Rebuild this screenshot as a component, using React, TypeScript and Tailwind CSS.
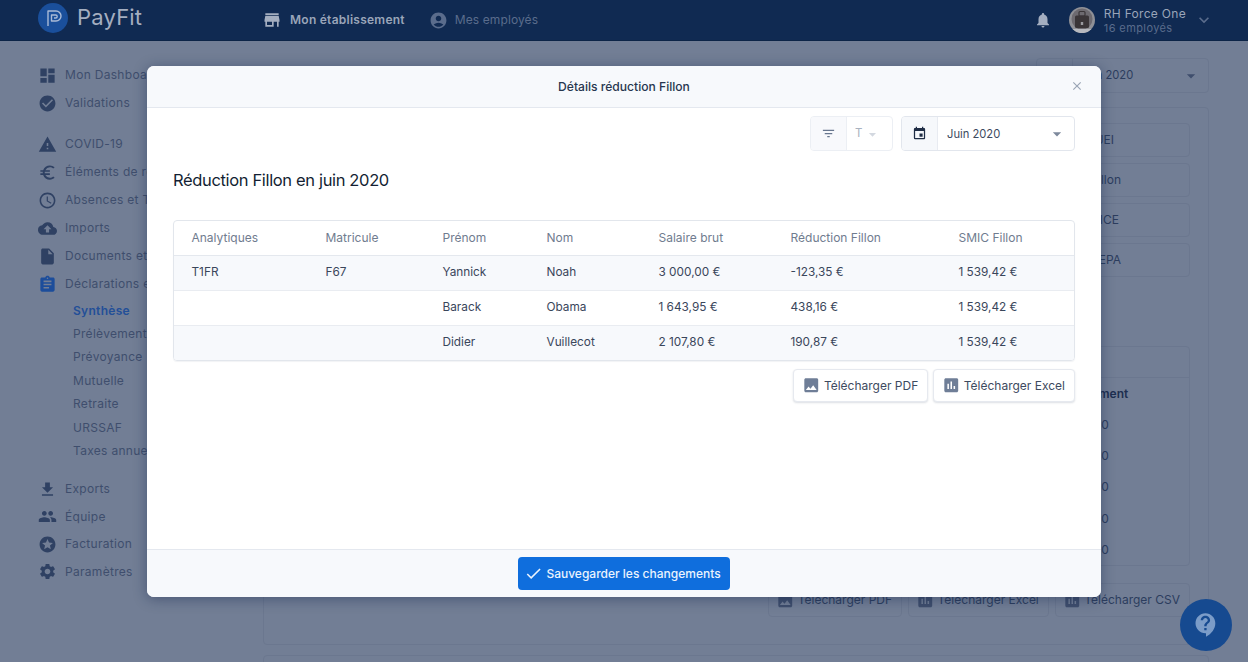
import {
  MdAccessTime,
  MdAccountCircle,
  MdArrowDropDown,
  MdAssignment,
  MdCheck,
  MdCheckCircle,
  MdClose,
  MdCloudUpload,
  MdContactSupport,
  MdDashboard,
  MdEuroSymbol,
  MdEvent,
  MdFileDownload,
  MdFilterList,
  MdImage,
  MdInsertChart,
  MdInsertDriveFile,
  MdKeyboardArrowDown,
  MdNotifications,
  MdPeople,
  MdSettings,
  MdStars,
  MdStore,
  MdWarning,
} from "react-icons/md";

type IconType = React.ComponentType<{ className?: string }>;

const topItems = [
  { label: "Mon Dashboard", Icon: MdDashboard },
  { label: "Validations", Icon: MdCheckCircle },
];

const midItems = [
  { label: "COVID-19", Icon: MdWarning },
  { label: "Éléments de rémunération", Icon: MdEuroSymbol },
  { label: "Absences et Temps", Icon: MdAccessTime },
  { label: "Imports", Icon: MdCloudUpload },
  { label: "Documents et contrats", Icon: MdInsertDriveFile },
];

const subItems = ["Prélèvement", "Prévoyance", "Mutuelle", "Retraite", "URSSAF", "Taxes annuelles"];

const bottomItems = [
  { label: "Exports", Icon: MdFileDownload },
  { label: "Équipe", Icon: MdPeople },
  { label: "Facturation", Icon: MdStars },
  { label: "Paramètres", Icon: MdSettings },
];

const reportButtons = [
  { label: "Détails JEI", className: "pr-[75px]" },
  { label: "Réduction Fillon", className: "pr-[68px]" },
  { label: "Détails CICE", className: "pr-[70px]" },
  { label: "Détails TEPA", className: "pr-[68px]" },
];

const rows = [
  ["T1FR", "F67", "Yannick", "Noah", "3 000,00 €", "-123,35 €", "1 539,42 €"],
  ["", "", "Barack", "Obama", "1 643,95 €", "438,16 €", "1 539,42 €"],
  ["", "", "Didier", "Vuillecot", "2 107,80 €", "190,87 €", "1 539,42 €"],
];

function NavRow({ label, Icon, active = false, compact = false }: { label: string; Icon: IconType; active?: boolean; compact?: boolean }) {
  return (
    <div className={`flex items-center gap-[8px] pl-[38px] whitespace-nowrap ${compact ? "h-[27.5px]" : "h-[28px]"}`}>
      <Icon className={`h-[19px] w-[19px] shrink-0 ${active ? "text-[#1c4d9b]" : "text-[#2f4163]"}`} />
      <span className="text-[12px] tracking-[0.3px] text-[#3f4e6d]">{label}</span>
    </div>
  );
}

function Sidebar() {
  return (
    <aside className="w-[147px] shrink-0 overflow-hidden pt-[20px]">
      {topItems.map((item) => (
        <NavRow key={item.label} {...item} />
      ))}
      <div className="h-[13px]" />
      {midItems.map((item) => (
        <NavRow key={item.label} {...item} />
      ))}
      <NavRow label="Déclarations et taxes" Icon={MdAssignment} active />
      <div className="pl-[73px] pt-[1px] text-[12px] tracking-[0.3px] text-[#3f4e6d]">
        <div className="flex h-[23.4px] items-center font-semibold text-[#234f98]">Synthèse</div>
        {subItems.map((label) => (
          <div key={label} className="flex h-[23.4px] items-center whitespace-nowrap">
            {label}
          </div>
        ))}
      </div>
      <div className="h-[13px]" />
      {bottomItems.map((item) => (
        <NavRow key={item.label} {...item} compact />
      ))}
    </aside>
  );
}

function Avatar() {
  return (
    <svg viewBox="0 0 26 26" className="h-[26px] w-[26px] shrink-0">
      <circle cx="13" cy="13" r="13" fill="#8f9096" />
      <circle cx="13" cy="12" r="10.5" fill="#6d6a70" />
      <rect x="6" y="8.5" width="14" height="12.5" rx="1.5" fill="#3a3538" />
      <rect x="10" y="4.5" width="6" height="4.5" rx="1" fill="none" stroke="#3a3538" strokeWidth="1.2" />
      <rect x="11.8" y="15" width="2.4" height="3" fill="#9a9aa0" />
      <path d="M3.5 22h19a13 13 0 0 1-19 0z" fill="#b7b9bf" />
    </svg>
  );
}

function Header() {
  return (
    <header className="flex h-[41px] shrink-0 items-center border-b border-[#0c2447] bg-[#102a52] pl-[38px] pr-[34px]">
      <div className="flex w-[224px] items-center gap-[9px]">
        <svg viewBox="0 0 30 30" className="-mt-[4px] h-[30px] w-[30px] shrink-0">
          <circle cx="15" cy="15" r="15" fill="#1a4f9b" />
          <path
            d="M10 23V8h8a5 5 0 0 1 0 10h-4.5v-6h4.2a1.5 1.5 0 0 1 0 3H16"
            fill="none"
            stroke="#a9bad6"
            strokeWidth="1.4"
            strokeLinejoin="round"
          />
        </svg>
        <span className="-mt-[7px] text-[22px] leading-none tracking-[0.2px] text-[#a4aec0]">PayFit</span>
      </div>
      <nav className="flex items-center gap-[24px] text-[12px]">
        <div className="flex items-center gap-[8px] font-semibold tracking-[0.25px] text-[#9aa5b9]">
          <MdStore className="h-[20px] w-[20px] text-[#a4aec0]" />
          Mon établissement
        </div>
        <div className="flex items-center gap-[7px] tracking-[0.1px] text-[#5a6c8c]">
          <MdAccountCircle className="h-[19px] w-[19px]" />
          Mes employés
        </div>
      </nav>
      <div className="ml-auto flex items-center">
        <MdNotifications className="mr-[17px] h-[18px] w-[18px] text-[#a4aec0]" />
        <Avatar />
        <div className="ml-[9px] tracking-[0.3px]">
          <div className="text-[12px] leading-[15px] text-[#9aa5b9]">RH Force One</div>
          <div className="text-[11px] leading-[14px] tracking-[0.4px] text-[#5a6c8c]">16 employés</div>
        </div>
        <MdKeyboardArrowDown className="ml-[8px] h-[20px] w-[20px] text-[#5a6c8c]" />
      </div>
    </header>
  );
}

function GhostButton({ label, Icon }: { label: string; Icon: IconType }) {
  return (
    <div className="flex h-[34px] items-center gap-[3px] whitespace-nowrap rounded-[4px] border border-[#6b778f] pl-[7px] pr-[9px] text-[12px] text-[#2c3d5e]">
      <Icon className="h-[18.5px] w-[18.5px] text-[#3f4e6d]" />
      {label}
    </div>
  );
}

function Background() {
  return (
    <div className="flex h-[662px] flex-col bg-[#727e95]">
      <Header />
      <div className="flex min-h-0 flex-1">
        <Sidebar />
        <main className="ml-[116px] w-[946px] pt-[17px]">
          <div className="flex justify-end">
            <div className="flex h-[35px] w-[173px] rounded-[4px] border border-[#6b778f]">
              <div className="w-[36px] border-r border-[#6b778f]" />
              <div className="flex flex-1 items-center justify-between pl-[7px] pr-[7px] text-[11.2px] text-[#2c3d5e]">
                Juin 2020
                <MdArrowDropDown className="h-[20px] w-[20px] text-[#3f4e6d]" />
              </div>
            </div>
          </div>
          <section className="mt-[14px] h-[538px] rounded-[4px] border border-[#6b778f] pr-[18px] pt-[15px]">
            <div className="flex flex-col items-end gap-[6px]">
              {reportButtons.map((b) => (
                <div
                  key={b.label}
                  className={`flex h-[34px] w-[240px] items-center justify-end rounded-[4px] border border-[#6b778f] text-[12px] text-[#2c3d5e] ${b.className}`}
                >
                  {b.label}
                </div>
              ))}
            </div>
            <div className="ml-auto mt-[69px] h-[220px] w-[500px] rounded-[4px] border border-[#6b778f]">
              <div className="h-[31px] border-b border-[#6b778f]" />
              <div className="text-[12px] text-[#2c3d5e]">
                <div className="flex h-[31px] items-center whitespace-nowrap pl-[383px] font-semibold text-[#1d2f50]">Paiement</div>
                {[0, 1, 2, 3, 4].map((i) => (
                  <div key={i} className="flex h-[31.3px] items-center whitespace-nowrap pl-[380px]">
                    120,00
                  </div>
                ))}
              </div>
            </div>
            <div className="mt-[17px] flex justify-end gap-[6px]">
              <GhostButton label="Télécharger PDF" Icon={MdImage} />
              <GhostButton label="Télécharger Excel" Icon={MdInsertChart} />
              <GhostButton label="Télécharger CSV" Icon={MdInsertChart} />
            </div>
          </section>
          <div className="mt-[10px] h-[40px] rounded-[4px] border border-[#6b778f]" />
        </main>
      </div>
    </div>
  );
}

function DownloadButton({ label, Icon }: { label: string; Icon: IconType }) {
  return (
    <button className="flex h-[33px] items-center gap-[3px] whitespace-nowrap rounded-[4px] border border-[#e6e9ef] bg-white pl-[8px] pr-[9px] text-[12px] text-[#3d4a60] shadow-[0_1px_2px_rgba(40,55,85,0.16)]">
      <Icon className="h-[18.5px] w-[18.5px] text-[#6f7e97]" />
      {label}
    </button>
  );
}

function Modal() {
  return (
    <div className="absolute left-[147px] top-[66px] flex h-[531px] w-[954px] flex-col overflow-hidden rounded-[7px] bg-white shadow-[0_2px_14px_rgba(20,38,75,0.45)]">
      <div className="relative flex h-[42px] shrink-0 items-center justify-center border-b border-[#e4e8ef] bg-[#f7f9fc] pt-[1px] text-[12.1px] font-medium text-[#27364f]">
        Détails réduction Fillon
        <MdClose className="absolute right-[17px] top-[13px] h-[14px] w-[14px] text-[#9aa5b5]" />
      </div>

      <div className="flex-1 px-[26px] pt-[8px]">
        <div className="flex justify-end gap-[8px]">
          <div className="flex h-[35px] w-[83px] overflow-hidden rounded-[4px] border border-[#eceff4]">
            <div className="flex w-[36px] items-center justify-center border-r border-[#eceff4] bg-[#f8f9fc]">
              <MdFilterList className="h-[15px] w-[15px] text-[#68778f]" />
            </div>
            <div className="flex flex-1 items-center pl-[8px] pt-[1px] text-[11.5px] text-[#a9b2c0]">
              T
              <MdArrowDropDown className="ml-[2px] h-[17px] w-[17px] text-[#d3d8e0]" />
            </div>
          </div>
          <div className="flex h-[35px] w-[174px] overflow-hidden rounded-[4px] border border-[#e2e6ed]">
            <div className="flex w-[36px] items-center justify-center border-r border-[#e8ebf1] bg-[#f6f8fb]">
              <MdEvent className="h-[15px] w-[15px] text-[#1f2d45]" />
            </div>
            <div className="flex flex-1 items-center justify-between pl-[9px] pr-[7px] pt-[1px] text-[11.2px] text-[#3d4a60]">
              Juin 2020
              <MdArrowDropDown className="h-[20px] w-[20px] text-[#7d899c]" />
            </div>
          </div>
        </div>

        <h2 className="mt-[18px] text-[16.5px] font-normal leading-[22px] tracking-[-0.35px] text-[#141f33]">
          Réduction Fillon en juin 2020
        </h2>

        <div className="mt-[29px] overflow-hidden rounded-[4px] border border-[#e2e6ec] shadow-[0_1px_1px_rgba(40,55,85,0.06)]">
          <table className="w-full table-fixed border-collapse text-left text-[11.8px]">
            <thead>
              <tr className="h-[34px] border-b border-[#e4e8ee] text-[12px] text-[#707c8f]">
                <th className="w-[134px] pl-[17.5px] font-normal">Analytiques</th>
                <th className="w-[117px] pl-[17.5px] font-normal">Matricule</th>
                <th className="w-[104px] pl-[17.5px] font-normal">Prénom</th>
                <th className="w-[112px] pl-[17.5px] font-normal">Nom</th>
                <th className="w-[132px] pl-[17.5px] font-normal">Salaire brut</th>
                <th className="w-[168px] pl-[17.5px] font-normal">Réduction Fillon</th>
                <th className="pl-[17.5px] font-normal">SMIC Fillon</th>
              </tr>
            </thead>
            <tbody className="text-[#3a465b]">
              {rows.map((row, i) => (
                <tr key={i} className={`h-[35px] ${i < 2 ? "border-b border-[#e9ecf1]" : ""} ${i % 2 === 0 ? "bg-[#f7f9fc]" : "bg-white"}`}>
                  {row.map((cell, j) => (
                    <td key={j} className="pl-[17.5px]">
                      {cell}
                    </td>
                  ))}
                </tr>
              ))}
            </tbody>
          </table>
        </div>

        <div className="mt-[8px] flex justify-end gap-[5px]">
          <DownloadButton label="Télécharger PDF" Icon={MdImage} />
          <DownloadButton label="Télécharger Excel" Icon={MdInsertChart} />
        </div>
      </div>

      <div className="flex h-[48px] shrink-0 items-center justify-center border-t border-[#e4e8ef] bg-[#f7f9fc]">
        <button className="flex h-[33px] w-[212px] items-center justify-center gap-[3px] rounded-[4px] bg-[#0f6edd] pr-[3px] text-[12px] font-medium text-[#eaf3fd]">
          <MdCheck className="h-[19px] w-[19px]" />
          Sauvegarder les changements
        </button>
      </div>
    </div>
  );
}

export default function App() {
  return (
    <div className="relative h-[662px] overflow-hidden font-['Inter',sans-serif]">
      <Background />
      <Modal />
      <div className="absolute left-[1180px] top-[599px] flex h-[52px] w-[52px] items-center justify-center rounded-full bg-[#164a90]">
        <MdContactSupport className="h-[28px] w-[28px] text-[#7b9cc8]" />
      </div>
    </div>
  );
}
